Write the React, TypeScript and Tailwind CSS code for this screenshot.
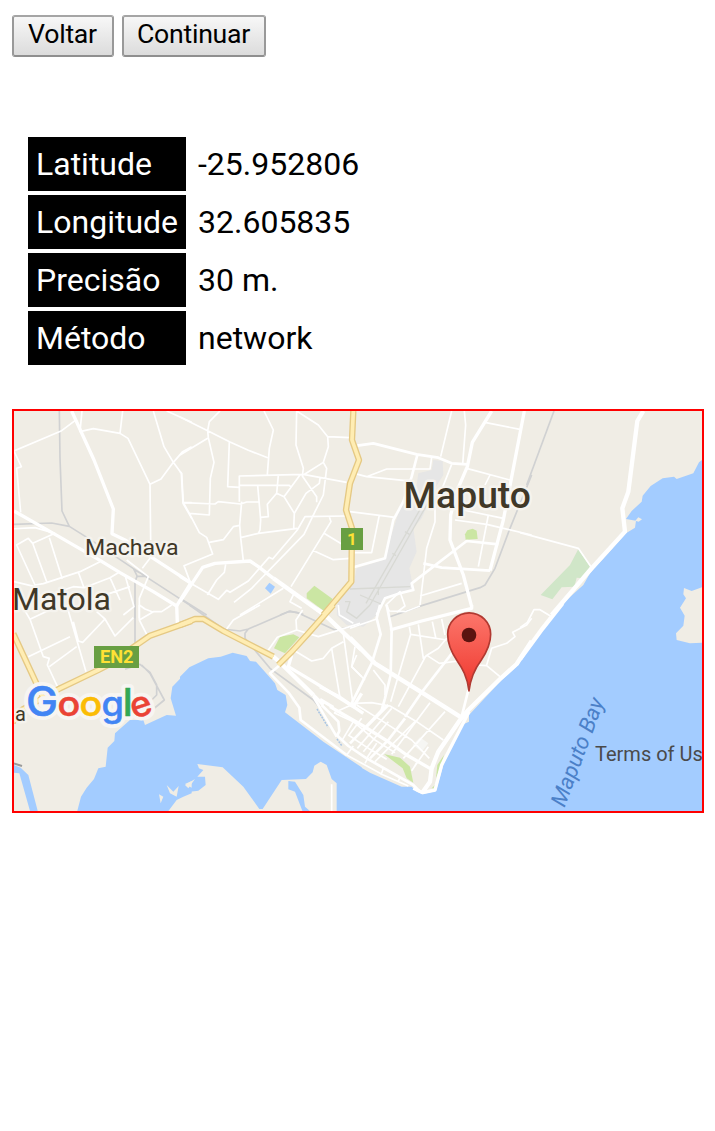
import React from "react";

type Tile = {
  x: number;
  y: number;
  water?: string;
  land?: string;
  airport?: string;
  runway?: string;
  park?: string;
  reserve?: string;
  pale?: string;
  rail?: string;
  minor?: string;
  street?: string;
  major?: string;
  trunk?: string;
  highway?: string;
};

// Each tile is drawn at three units per pixel from its own origin.
const tiles: Tile[] = [
  {
    x: 10,
    y: 405,
    rail: "M148 18L150 160L156 318L178 364L240 403L375 494L545 604M12 358L125 354L178 364M370 490L382 514L410 514L372 494M382 512L375 530V640",
    minor:
      "M12 138L155 77L195 47M216 18L210 80L250 71L330 85L354 100L420 238L453 222L490 172L518 140L545 125M330 85L338 18M420 238L422 405M430 18L462 125L490 172L514 205L519 295L545 340M470 18L545 52M519 293H545M12 138L34 185L20 190L32 322M0 372L75 368L135 385M130 387L68 415L55 400L20 420L75 540L100 536L210 500L270 470M68 415L110 530M118 398L157 522M205 502L222 548M140 562L190 545L222 548L300 518L325 503M12 530L75 545L100 590M300 518L330 585M270 575L360 545M345 510L372 605L340 630M420 460L397 490M350 465L415 515L388 580V640M388 600L405 612L430 622",
    major:
      "M185 18L252 165L310 312L306 386L345 405L430 460L545 535M12 318L130 385L260 460L330 503L430 560L500 603L545 530",
  },
  {
    x: 180,
    y: 405,
    water: "M255 550L268 533L285 545L272 566Z",
    park: "M380 565L403 542L458 582L432 618L380 580Z",
    rail: "M0 580L80 630M300 630L330 618L370 628",
    minor:
      "M0 36L83 77L150 111L205 136L263 158M120 18L88 50L83 77L85 98L102 172L91 220L88 330L28 325M0 150L83 100M148 111L143 245L178 247M252 18L280 75L268 130L262 208M178 290V213L370 208L500 232M178 241H328L333 247M295 211L290 265L262 298L265 335L242 337M233 241L242 345L240 375L235 385M290 265L312 275L343 325L341 370M360 210L312 275M0 200L5 205L10 293L105 297L115 290L182 297L200 291H235M10 293L28 325L58 383L80 397L98 447L12 482L32 535M185 290L179 360L182 398L190 467M182 398L235 385L352 370M88 412L130 404L160 365L179 361M350 18L348 120L370 190L367 213L410 275V292M350 18L415 60L443 95L445 125L430 172L370 210M443 95L510 98M430 172L440 190L430 270L405 320L372 388L215 550L162 592M420 220L418 235L378 265L343 325M495 333L375 335L352 375L278 462L267 457L205 528L150 562L140 556L115 583L32 535M448 335L453 350L333 545M432 385L490 420M398 436L460 464L510 460M137 478L133 502L110 525L82 570M310 550L180 630M365 610L330 590L345 560",
    street: "M0 515L32 535",
    major: "M0 590L68 487L105 475L210 468L235 485L280 520",
    trunk: "M280 520L430 627",
    highway: "M520 18L516 105L537 165L510 235L498 315L516 370L514 530L430 630",
  },
  {
    x: 350,
    y: 405,
    airport:
      "M205 205L245 195L250 165L278 168L280 210L255 250L215 340L190 370L200 440L178 490L190 550L110 575L80 630L40 665L-10 660L-40 630L-35 570L10 540L20 490L100 465L150 310L200 240Z",
    runway:
      "M250 265L60 600M238 265L48 595M165 380L178 388M127 445L138 452M0 552L180 545M30 570L100 600M85 545V570M-15 590L0 590L-10 620L20 640L60 600",
    park: "M345 388L352 376L368 371L380 377L383 402L347 404Z",
    rail: "M545 210L480 370L435 490L405 540L390 548L215 602L120 635",
    minor:
      "M12 205L50 215L110 192H240L245 157M50 215L160 226H185M305 18L272 155M343 18L347 60L338 178M408 53L510 73M350 190L480 225M305 178L255 305V350L230 430L210 600M420 210L405 240M340 315L460 340M315 345L410 358L545 390M0 320L135 337M88 330L65 443H0M415 330L385 485M210 573L335 535M210 603L165 620L118 618L108 600L150 560L165 603L140 622",
    street:
      "M22 122L70 115L200 148L265 158L305 175L352 178M202 150L185 215L160 290L130 345L105 460L10 487M445 418L350 408L185 535L190 555L150 565L105 580L80 630M220 475L275 488L420 497",
    major:
      "M425 18L367 112L352 185L320 260L302 330L300 405L340 510L365 605M523 18L490 190L460 345L420 497",
  },
  {
    x: 520,
    y: 405,
    water:
      "M546 165L537 172L520 205L470 222L462 215L428 220L392 243L368 272L365 290L335 318L318 342L348 347L345 368L318 385L265 445L210 505L190 540L140 585L105 630H546Z",
    land: "M346 347L355 337L366 343L356 350Z",
    reserve:
      "M175 432L210 485L190 520L170 518L163 545L125 547L97 583L62 570L150 480Z",
    rail: "M102 18L20 240",
    minor: "M0 383L175 430L213 485",
    trunk: "M370 18L352 48L325 260L307 310L315 380L213 492L95 630",
  },
  {
    x: 10,
    y: 605,
    water:
      "M545 185L487 245L482 280L498 332L470 330L405 360L400 345L360 345L315 385L313 408L293 428L287 485L265 490L252 522L230 548L213 575L200 625H470L500 585L520 575L545 565ZM12 480L32 488L55 510L85 625H62L28 505L12 503Z",
    land: "M447 568L460 575L452 595ZM470 540L490 560L506 543L500 575L480 565ZM525 537L545 528V548Z",
    rail: "M375 0V120M345 193L390 178L420 202L440 240V270L410 300M395 180L420 205L463 285L430 312",
    minor:
      "M35 0L60 43L100 155L118 160L112 180L145 250M170 0L228 200M55 155L180 95M118 185L200 125M60 43L125 12M190 50L205 108L218 112L285 42L260 20M285 42L315 93L370 38M388 0V45L412 92M485 0L455 20L430 20L388 45",
    major: "M500 0L502 55",
    highway:
      "M10 86L100 280M8 352L35 315L100 278L150 250L265 195L290 182L420 92L545 48",
  },
  {
    x: 180,
    y: 605,
    water:
      "M0 215L28 187L85 160L122 155L158 143L200 153L210 168L228 170L285 235L292 255L317 270L322 300L315 322L430 410L545 487V640H470V535L455 522L440 480L422 470L403 482L398 502L378 522L305 525L248 612H238L190 545L128 487L52 477L57 490L70 495L52 515H75L77 540L55 557L18 562L0 573ZM325 528L345 530L370 570L375 605L392 620H368L345 560L325 553Z",
    land: "M15 540L45 522L25 550Z",
    park: "M282 130L300 95L340 88L358 97L315 145Z",
    rail: "M28 0L130 72L180 78L205 72L325 20L350 22L465 75L540 60M205 72L195 85V100L270 190L400 285L420 310",
    minor:
      "M240 0L160 45L140 72M265 135L292 97L350 75L415 95L540 55M350 75L348 45L368 15M340 135L395 168L430 160L455 130L490 110M455 130L480 278M490 85L520 305M475 0L478 30L520 55M515 185L530 150M515 185L545 215M455 538V618",
    street:
      "M300 180L270 205L325 262L358 308L362 345L500 450M400 275L470 395M425 300L475 350L478 378L470 395",
    major: "M335 150L325 185L400 230L520 305L545 265M400 270L430 300",
    trunk: "M280 155L300 172L400 270M410 12L430 25L545 135",
    highway: "M0 60L45 42L70 42L130 78L280 155M460 0L385 85L335 140L295 180",
  },
  {
    x: 350,
    y: 605,
    water:
      "M545 120L505 180L450 230L357 330V350L340 358L308 420L280 480L258 558L218 568L200 560L185 545H155L60 503L0 468V618H545Z",
    park: "M102 447L150 458L180 485L190 533L170 520L158 490ZM282 450L262 480L258 520L270 490ZM245 550L255 540V552Z",
    pale: "M210 397L235 415L215 440L188 420Z",
    minor:
      "M0 70L80 42M178 65L182 88L122 290M182 88L290 105M205 58L220 160L232 150L265 130L290 100M247 50L258 102M275 42L285 90M232 152L268 175L350 165M228 152L145 305M380 180L410 182L450 215M410 180L425 130L470 115L495 95L488 82L530 60L545 40M15 125L5 185L45 225M70 195L105 240V270",
    street:
      "M110 0L125 75L122 210L105 280L95 315M90 0L80 40L92 88L65 175L0 305M325 120L215 262L165 335M355 255L335 335",
    major:
      "M357 320L275 480L255 555L218 563L190 550M120 75L215 48L365 10V0",
    trunk:
      "M0 98L75 175L215 262L330 335M545 108L500 177L450 222L355 315L330 345L265 440L245 490L240 530L218 562",
  },
  {
    x: 320,
    y: 680,
    minor:
      "M42 98L105 70L155 68L210 78L290 125L370 180M110 75L185 122L275 180L328 235M42 98L100 125L165 180L225 218M85 165L150 208L200 238M100 125L68 178M125 115L85 168M215 85L112 205M205 125L130 215M285 125L165 245M330 68L215 223M375 95L250 235M325 200L275 272M290 248L280 265M100 198L80 225L190 285L265 318M145 232L135 250M190 265L183 285M240 290L235 305M170 190L140 235",
    street:
      "M195 80L90 190M205 75L130 150M255 115L205 180L150 235M50 165L85 198L140 235L280 315L300 335",
    major: "M0 20L60 52L130 100M30 80L130 138L200 182L260 225L335 268M0 58L40 82",
  },
  {
    x: 520,
    y: 605,
    water: "M127 0L68 77L0 170V618H546V0Z",
    land: "M546 -53L515 -42L492 -51L490 -32L498 -20L480 8L494 32L490 62L468 85L470 105L510 115L546 113Z",
    minor: "M0 68L22 52L42 14H60L90 32",
    trunk: "M127 -5L68 70L0 163",
  },
];

type LayerKey = Exclude<keyof Tile, "x" | "y">;

function Area({ layer, className }: { layer: LayerKey; className: string }) {
  return (
    <g className={className}>
      {tiles.map((t) =>
        t[layer] ? (
          <path
            key={`${t.x}-${t.y}`}
            d={t[layer]}
            transform={`translate(${t.x} ${t.y}) scale(0.33333)`}
          />
        ) : null
      )}
    </g>
  );
}

function Line({
  layer,
  color,
  width,
}: {
  layer: LayerKey;
  color: string;
  width: number;
}) {
  return (
    <g fill="none" stroke={color} strokeWidth={width} strokeLinejoin="round">
      {tiles.map((t) =>
        t[layer] ? (
          <path
            key={`${t.x}-${t.y}`}
            d={t[layer]}
            transform={`translate(${t.x} ${t.y}) scale(0.33333)`}
          />
        ) : null
      )}
    </g>
  );
}

const wordmark = [
  { ch: "G", x: 26, w: 32, size: 40.5, fill: "#4285f4" },
  { ch: "o", x: 57.4, w: 22.8, size: 35, fill: "#ea4335" },
  { ch: "o", x: 79.5, w: 22.8, size: 35, fill: "#fbbc05" },
  { ch: "g", x: 101.6, w: 22.4, size: 35, fill: "#4285f4" },
  { ch: "l", x: 122.8, w: 10, size: 37.5, fill: "#34a853" },
];

function Wordmark() {
  return (
    <g className="font-['Inter',sans-serif] font-medium">
      {[true, false].map((halo) => (
        <g
          key={String(halo)}
          strokeWidth={halo ? 8 : 0.5}
          strokeLinejoin="round"
          aria-hidden={halo}
        >
          {wordmark.map((l) => (
            <text
              key={l.x}
              x={l.x}
              y={716}
              fontSize={l.size}
              textLength={l.w}
              lengthAdjust="spacingAndGlyphs"
              fill={halo ? "#f7f5f2" : l.fill}
              stroke={halo ? "#f7f5f2" : l.fill}
            >
              {l.ch}
            </text>
          ))}
          <text
            x={130}
            y={716}
            fontSize={35}
            textLength={21.5}
            lengthAdjust="spacingAndGlyphs"
            transform="rotate(-18 141 706)"
            fill={halo ? "#f7f5f2" : "#ea4335"}
            stroke={halo ? "#f7f5f2" : "#ea4335"}
          >
            e
          </text>
        </g>
      ))}
    </g>
  );
}

function MapView() {
  return (
    <svg
      viewBox="14 411 688 400"
      className="block h-full w-full bg-[#f0ede5] font-['Roboto',sans-serif]"
    >
      <defs>
        <linearGradient id="pin" x1="0" y1="0" x2="0" y2="1">
          <stop offset="0" stopColor="#fc766b" />
          <stop offset="0.7" stopColor="#f34a40" />
          <stop offset="1" stopColor="#ea3328" />
        </linearGradient>
      </defs>

      <Area layer="airport" className="fill-[#e6e6e6]" />
      <Area layer="water" className="fill-[#a3ccff]" />
      <Area layer="land" className="fill-[#f0ede5]" />
      <Area layer="park" className="fill-[#cbe6a3]" />
      <Area layer="reserve" className="fill-[#d0e6c8]" />
      <Area layer="pale" className="fill-[#f6f6f3]" />
      <Line layer="runway" color="#d8d9d4" width={4} />
      <Line layer="rail" color="#d0d1d2" width={5} />
      <Line layer="minor" color="#ffffff" width={5} />
      <Line layer="street" color="#ffffff" width={8} />
      <Line layer="major" color="#ffffff" width={10} />
      <Line layer="trunk" color="#ffffff" width={13} />
      <Line layer="highway" color="#e5c984" width={19} />
      <Line layer="highway" color="#ffedb3" width={11} />
      <path d="M14 763.5L22 766" stroke="#9a9a9a" strokeWidth={2} />
      <path
        d="M317 709L328 727M337 739L342 746"
        stroke="#a9c5e4"
        strokeWidth={1.5}
        strokeDasharray="2 1"
      />

      <rect x={341} y={528} width={22} height={22} fill="#689f42" />
      <text x={347} y={545} fontSize={17} fontWeight={700} fill="#ffe135">
        1
      </text>
      <rect x={94} y={646} width={45} height={22} fill="#689f42" />
      <text
        x={100}
        y={663}
        fontSize={18}
        fontWeight={700}
        textLength={33.5}
        lengthAdjust="spacingAndGlyphs"
        fill="#ffe135"
      >
        EN2
      </text>

      <g
        fill="#403828"
        stroke="#f7f5f0"
        strokeOpacity={0.85}
        strokeWidth={5}
        strokeLinejoin="round"
        className="[paint-order:stroke]"
      >
        <text
          x={85}
          y={555}
          fontSize={22.5}
          textLength={93.5}
          lengthAdjust="spacingAndGlyphs"
        >
          Machava
        </text>
        <text
          x={12}
          y={610}
          fontSize={31}
          textLength={99}
          lengthAdjust="spacingAndGlyphs"
        >
          Matola
        </text>
        <text
          x={403.5}
          y={508}
          fontSize={36.5}
          fontWeight={500}
          textLength={127.5}
          lengthAdjust="spacingAndGlyphs"
        >
          Maputo
        </text>
        <text x={15} y={721} fontSize={20}>
          a
        </text>
      </g>

      <text
        transform="translate(564.5 808) rotate(-69.5)"
        fontSize={22}
        fontStyle="italic"
        textLength={114}
        lengthAdjust="spacingAndGlyphs"
        fill="#4b80c8"
      >
        Maputo Bay
      </text>
      <text x={595} y={761} fontSize={20} fill="#4a4a4a">
        Terms of Use
      </text>

      <Wordmark />

      <g transform="translate(350 605) scale(0.33333)">
        <path
          d="M357 258C352 215 337 190 320 165C303 140 293 115 293 88A64.500 64.500 0 0 1 422 88C422 115 411 140 394 165C375 190 362 215 357 258Z"
          fill="url(#pin)"
          stroke="#b13931"
          strokeWidth={5}
          strokeLinejoin="round"
        />
        <circle cx={357} cy={90} r={22} fill="#5b1410" />
      </g>
    </svg>
  );
}

const rows = [
  ["Latitude", "-25.952806"],
  ["Longitude", "32.605835"],
  ["Precisão", "30 m."],
  ["Método", "network"],
];

const buttonClass =
  "flex h-[42px] justify-center rounded-[3px] border-2 border-t-[#a5a5a5] border-x-[#999999] border-b-[#8f8f8f] bg-linear-to-b from-[#f7f7f7] to-[#dcdcdc] pt-px pr-px text-[26.67px] leading-[32px] tracking-[-0.25px]";

export default function App() {
  return (
    <main className="flex min-h-[1131px] flex-col bg-white px-3 pt-[15px] font-['Roboto',sans-serif] text-black">
      <div className="flex gap-2">
        <button className={`${buttonClass} w-[102px]`}>Voltar</button>
        <button className={`${buttonClass} w-[144px]`}>Continuar</button>
      </div>

      <dl className="mt-20 ml-4 flex flex-col gap-1 text-[32px] leading-[38px]">
        {rows.map(([label, value]) => (
          <div key={label} className="flex gap-1">
            <dt className="w-[158px] bg-black p-2 text-white">{label}</dt>
            <dd className="p-2">{value}</dd>
          </div>
        ))}
      </dl>

      <div className="mt-11 h-[404px] w-[692px] overflow-hidden border-2 border-[#ff0000]">
        <MapView />
      </div>
    </main>
  );
}
